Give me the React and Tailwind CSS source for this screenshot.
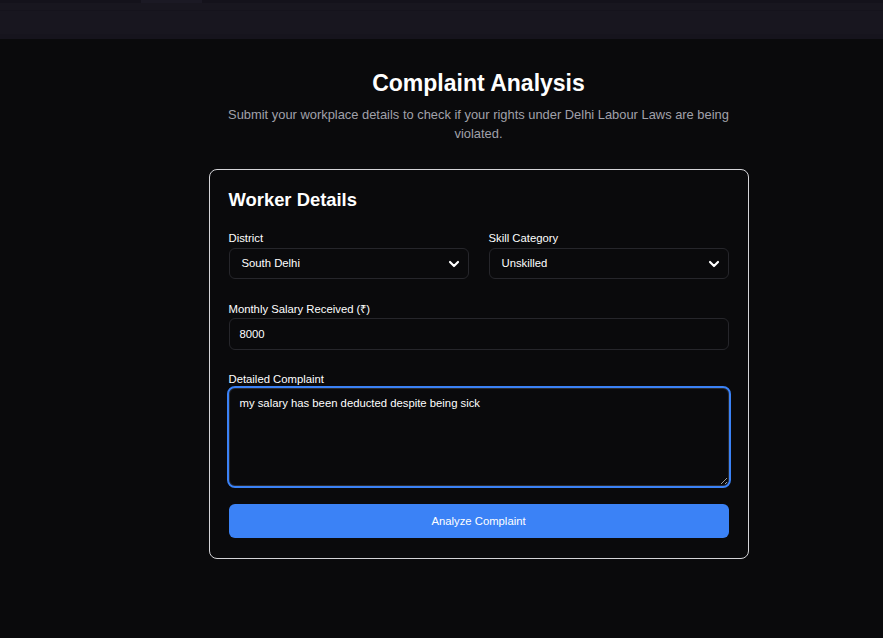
import React from "react";
import { ChevronDown } from "lucide-react";

function Select({ value }) {
  return (
    <div className="relative h-[31px] w-full rounded-[6px] border border-[#26262b] bg-[#0a0a0c] flex items-center pl-[12px] pr-[6px]">
      <span className="flex-1 text-[11.3px] font-medium text-white">{value}</span>
      <ChevronDown size={16} strokeWidth={3.2} className="text-white" />
    </div>
  );
}

export default function App() {
  return (
    <div
      className="min-h-[638px] bg-[#0a0a0c] text-white"
      style={{ fontFamily: '"Liberation Sans", Arial, sans-serif' }}
    >
      <div className="h-[39px] bg-[#18161f] flex flex-col">
        <div className="h-[3px] bg-[#14121b] flex">
          <div className="ml-[141px] w-[61px] bg-[#1b1924]" />
        </div>
        <div className="h-[7px]" />
        <div className="h-px bg-[#15131c]" />
        <div className="flex-1" />
        <div className="h-[5px] bg-[#16141d]" />
      </div>
      <div className="pl-[74px] flex flex-col items-center">
        <h1 className="mt-[30px] text-[23px] leading-[28px] font-bold">
          Complaint Analysis
        </h1>
        <p className="mt-[8px] w-[520px] text-center text-[12.9px] leading-[19px] text-[#a1a1aa]">
          Submit your workplace details to check if your rights under Delhi Labour Laws are being violated.
        </p>
        <div className="mt-[26px] w-[540px] rounded-[8px] border border-[#d4d4d8] bg-[#0a0a0c] pt-[18px] px-[19px] pb-[20px]">
          <h2 className="text-[18.4px] leading-[24px] font-bold">Worker Details</h2>
          <div className="mt-[19px] grid grid-cols-2 gap-[20px]">
            <div>
              <div className="text-[11.3px] leading-[14px] font-medium">District</div>
              <div className="mt-[3px]">
                <Select value="South Delhi" />
              </div>
            </div>
            <div>
              <div className="text-[11.3px] leading-[14px] font-medium">Skill Category</div>
              <div className="mt-[3px]">
                <Select value="Unskilled" />
              </div>
            </div>
          </div>
          <div className="mt-[23px]">
            <div className="text-[11.3px] leading-[14px] font-medium">Monthly Salary Received (₹)</div>
            <div className="mt-[2px] h-[32px] rounded-[6px] border border-[#26262b] flex items-center pl-[10px] text-[11.3px] font-medium">
              8000
            </div>
          </div>
          <div className="mt-[22px]">
            <div className="text-[11.3px] leading-[14px] font-medium">Detailed Complaint</div>
            <div className="mt-[2px]">
              <textarea
                readOnly
                value="my salary has been deducted despite being sick"
                className="block w-full h-[98px] rounded-[6px] border border-[#2a2a2e] bg-[#0a0a0c] px-[10px] pt-[7px] pb-[6px] text-[11.3px] leading-[14px] font-medium text-white outline-2 outline-[#3b82f6] outline-offset-0 resize-y"
                style={{ fontFamily: '"Liberation Sans", Arial, sans-serif' }}
              />
            </div>
          </div>
          <button className="mt-[18px] w-full h-[34px] rounded-[6px] bg-[#3b82f6] text-[11.3px] font-medium text-white">
            Analyze Complaint
          </button>
        </div>
      </div>
    </div>
  );
}
